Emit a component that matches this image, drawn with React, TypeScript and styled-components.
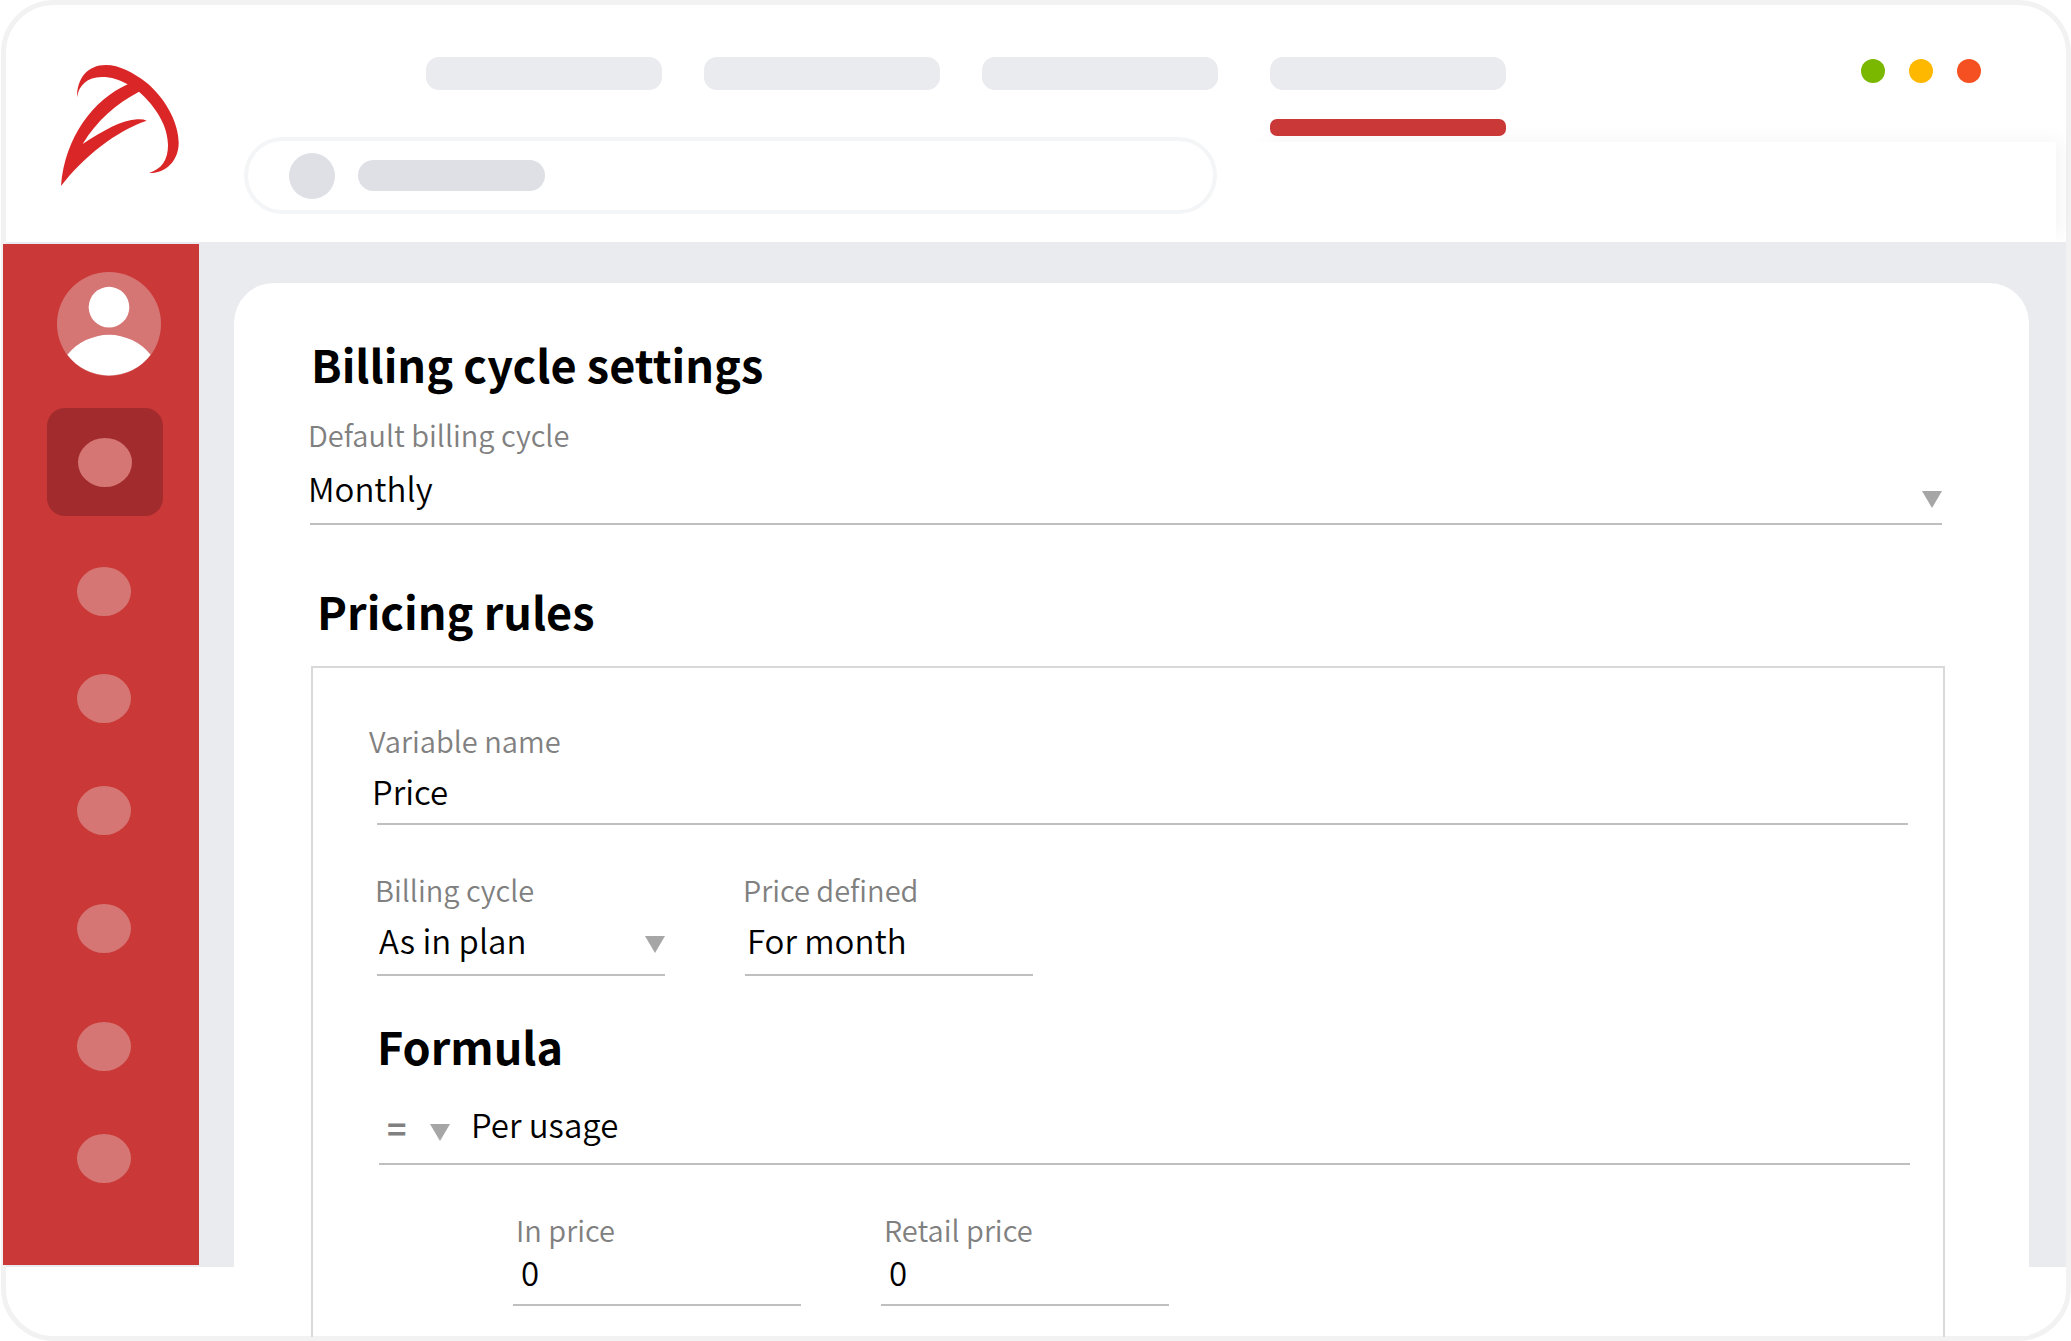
import React, { useId } from "react";
import styled, { createGlobalStyle } from "styled-components";

const color = {
  frame: "#f2f2f2",
  canvas: "#eaebef",
  skeleton: "#eaebef",
  skeletonDark: "#dfe0e5",
  searchBorder: "#f4f5f6",
  brand: "#ca3837",
  brandDark: "#a22b2d",
  brandSoft: "#d57675",
  logo: "#da2627",
  label: "#808080",
  arrow: "#a6a6a6",
  underline: "#bfbfbf",
  boxLine: "#d9d9d9",
};

const GlobalStyle = createGlobalStyle`
  *, *::before, *::after { box-sizing: border-box; }
  body {
    margin: 0;
    background: #fff;
    color: #000;
    font-family: "Noto Sans CJK JP", "Noto Sans", sans-serif;
  }
`;

/* ---------- shell ---------- */

const Frame = styled.div`
  display: flex;
  flex-direction: column;
  min-height: 100vh;
  margin-left: 1px;
  border: 5px solid ${color.frame};
  border-radius: 53px;
  background: #fff;
`;

const Header = styled.header`
  position: relative;
  display: flex;
  align-items: flex-start;
  padding: 52px 85px 28px 55px;
`;

const HeaderShade = styled.div`
  position: absolute;
  left: 1250px;
  right: 10px;
  top: 137px;
  bottom: 0;
  background: #fff;
  box-shadow: 8px -4px 20px -4px rgba(0, 0, 0, 0.05);
  clip-path: inset(-40px -12px 0 0);
`;

const LogoLink = styled.a`
  display: block;
  flex: 0 0 183px;
  padding-top: 8px;
  line-height: 0;
`;

const HeaderMain = styled.div`
  position: relative;
  display: flex;
  flex: 1;
  flex-direction: column;
  gap: 1px;
`;

const Nav = styled.nav`
  display: flex;
  align-items: flex-start;
  gap: 42px;
  padding-left: 182px;
`;

const NavItem = styled.a`
  display: flex;
  flex: 0 1 236px;
  flex-direction: column;
  gap: 29px;

  &[aria-current] {
    margin-left: 10px;
  }

  &::before {
    content: "";
    height: 33px;
    border-radius: 13px;
    background: ${color.skeleton};
  }

  &[aria-current]::after {
    content: "";
    height: 17px;
    border-radius: 7px;
    background: ${color.brand};
  }
`;

const Search = styled.label`
  display: flex;
  align-items: center;
  gap: 23px;
  width: 100%;
  max-width: 973px;
  height: 77px;
  padding: 0 41px;
  border: 4px solid ${color.searchBorder};
  border-radius: 39px;
`;

const SearchDot = styled.span`
  width: 46px;
  height: 46px;
  border-radius: 50%;
  background: ${color.skeletonDark};
`;

const SearchBar = styled.span`
  width: 187px;
  height: 31px;
  border-radius: 16px;
  background: ${color.skeletonDark};
`;

const SearchInput = styled.input`
  flex: 1;
  min-width: 0;
  border: 0;
  outline: 0;
  background: transparent;
  font: inherit;
`;

const WindowDots = styled.div`
  position: relative;
  display: flex;
  gap: 24px;
  padding-top: 2px;
`;

const WindowDot = styled.button<{ $fill: string }>`
  width: 24px;
  height: 24px;
  padding: 0;
  border: 0;
  border-radius: 50%;
  background: ${(p) => p.$fill};
`;

const Body = styled.div`
  position: relative;
  display: flex;
  flex: 1;
  background: linear-gradient(${color.canvas}, ${color.canvas}) no-repeat 0 0 / 100%
    calc(100% - 69px);
`;

/* ---------- sidebar ---------- */

const Sidebar = styled.nav`
  display: flex;
  flex: 0 0 196px;
  flex-direction: column;
  align-items: center;
  margin: 2px 0 71px -3px;
  padding-top: 28px;
  background: ${color.brand};
`;

const Avatar = styled.svg`
  display: block;
  width: 104px;
  height: 104px;
  margin-left: 16px;
`;

const SideItem = styled.button<{ $space: number; $active?: boolean }>`
  display: grid;
  place-items: center;
  width: 116px;
  height: ${(p) => (p.$active ? 108 : 49)}px;
  margin-top: ${(p) => p.$space}px;
  margin-left: ${(p) => (p.$active ? 8 : 6)}px;
  padding: 0;
  border: 0;
  border-radius: 18px;
  background: ${(p) => (p.$active ? color.brandDark : "transparent")};

  &::before {
    content: "";
    width: 54px;
    height: 49px;
    border-radius: 50%;
    background: ${color.brandSoft};
  }
`;

/* ---------- content ---------- */

const Card = styled.main`
  flex: 1;
  min-width: 0;
  margin: 41px 37px 0 35px;
  padding: 51px 84px 0 76px;
  border-radius: 40px 40px 0 0;
  background: #fff;
`;

const Heading = styled.h2<{ $indent?: number }>`
  margin: 0;
  padding-left: ${(p) => p.$indent ?? 0}px;
  font-size: 45px;
  font-weight: 700;
  line-height: 60px;
`;

const CycleSection = styled.section`
  padding: 22px 3px 56px 0;
`;

const RulesBox = styled.section`
  margin: 25px 0 -2px 1px;
  padding: 54px 35px 31px 64px;
  border: 2px solid ${color.boxLine};
  border-bottom: 0;
`;

const FieldBox = styled.div<{ $gap: number }>`
  display: flex;
  flex-direction: column;
  gap: ${(p) => p.$gap}px;
`;

const Label = styled.label<{ $inset: number }>`
  margin-left: ${(p) => p.$inset}px;
  color: ${color.label};
  font-size: 29px;
  font-weight: 350;
  line-height: 36px;
`;

const Line = styled.div<{ $drop: number }>`
  position: relative;
  display: flex;
  padding-bottom: ${(p) => p.$drop}px;
  border-bottom: 2px solid ${color.underline};
`;

const controlText = `
  flex: 1;
  min-width: 0;
  height: 44px;
  padding: 0;
  border: 0;
  border-radius: 0;
  outline: 0;
  appearance: none;
  background: transparent;
  color: #000;
  font-family: inherit;
  font-size: 33px;
  font-weight: 350;
  line-height: 44px;
`;

const Input = styled.input<{ $inset?: number }>`
  ${controlText}
  margin-left: ${(p) => p.$inset ?? 0}px;
`;

const Select = styled.select<{ $inset?: number }>`
  ${controlText}
  margin-left: ${(p) => p.$inset ?? 0}px;
`;

const Arrow = styled.svg<{ $bottom: number }>`
  position: absolute;
  right: 0;
  bottom: ${(p) => p.$bottom}px;
  width: 20px;
  height: 17px;
  fill: ${color.arrow};
  pointer-events: none;
`;

const Columns = styled.div<{ $indent?: number }>`
  display: flex;
  gap: 80px;
  padding: 46px 0 0 ${(p) => p.$indent ?? 0}px;

  & > * {
    flex: 0 1 288px;
    min-width: 0;
  }
`;

const FormulaHeading = styled(Heading)`
  margin: 40px 0 26px;
`;

const FormulaRow = styled.div`
  margin: 0 -2px 0 2px;
`;

const Operator = styled.div`
  position: relative;
  display: flex;
  flex: 0 0 71px;
  margin-right: 21px;
  padding-left: 8px;
`;

const OperatorSelect = styled.select`
  ${controlText}
  height: 52px;
  margin-bottom: -8px;
  color: ${color.label};
  font-weight: 700;
`;

function ArrowIcon({ bottom }: { bottom: number }) {
  return (
    <Arrow $bottom={bottom} viewBox="0 0 20 17" aria-hidden="true">
      <path d="M0 0h20L10 17z" />
    </Arrow>
  );
}

type FieldProps = {
  label: string;
  value: string;
  options?: string[];
  gap?: number;
  drop?: number;
  inset?: number;
  valueInset?: number;
  arrow?: number;
};

function Field({
  label,
  value,
  options,
  gap = 11,
  drop = 12,
  inset = -2,
  valueInset = inset,
  arrow = 21,
}: FieldProps) {
  const id = useId();
  return (
    <FieldBox $gap={gap}>
      <Label htmlFor={id} $inset={inset}>
        {label}
      </Label>
      <Line $drop={drop}>
        {options ? (
          <>
            <Select id={id} defaultValue={value} $inset={valueInset}>
              {options.map((o) => (
                <option key={o}>{o}</option>
              ))}
            </Select>
            <ArrowIcon bottom={arrow} />
          </>
        ) : (
          <Input id={id} defaultValue={value} $inset={valueInset} />
        )}
      </Line>
    </FieldBox>
  );
}

const sideItems = [
  { name: "Catalog", space: 32, active: true },
  { name: "Customers", space: 51 },
  { name: "Orders", space: 58 },
  { name: "Invoices", space: 63 },
  { name: "Reports", space: 69 },
  { name: "Tools", space: 69 },
  { name: "Settings", space: 63 },
];

export default function App() {
  return (
    <>
      <GlobalStyle />
      <Frame>
        <Header>
          <HeaderShade />
          <LogoLink href="#" aria-label="Home">
            <svg width="118" height="121" viewBox="183 195 354 363" aria-hidden="true">
              <path
                fill={color.logo}
                d="M231 292C231 235 262 195 318 195C358 195 400 218 437 246C492 290 536 365 536 428C536 480 500 520 447 519C485 508 504 480 504 436C504 380 470 322 417 275C350 310 290 362 248 432C310 392 365 360 412 358Q430 357 440 362C350 392 250 470 183 558C195 410 280 300 383 253C358 239 335 231 305 231C262 231 236 256 231 292Z"
              />
            </svg>
          </LogoLink>
          <HeaderMain>
            <Nav aria-label="Main">
              <NavItem href="#" aria-label="Overview" />
              <NavItem href="#" aria-label="Products" />
              <NavItem href="#" aria-label="Sales" />
              <NavItem href="#" aria-label="Billing" aria-current="page" />
            </Nav>
            <Search>
              <SearchDot />
              <SearchBar />
              <SearchInput type="search" aria-label="Search" />
            </Search>
          </HeaderMain>
          <WindowDots>
            <WindowDot $fill="#7ab800" aria-label="Minimize" />
            <WindowDot $fill="#ffb800" aria-label="Maximize" />
            <WindowDot $fill="#f45022" aria-label="Close" />
          </WindowDots>
        </Header>

        <Body>
          <Sidebar aria-label="Sections">
            <Avatar viewBox="0 0 105 105" aria-hidden="true">
              <circle cx="52.5" cy="52.5" r="52.5" fill={color.brandSoft} />
              <circle cx="52.5" cy="35.5" r="20.5" fill="#fff" />
              <path d="M10.5 83.500a52.500 52.500 0 0 0 84 0a54 54 0 0 0-84 0z" fill="#fff" />
            </Avatar>
            {sideItems.map((item) => (
              <SideItem
                key={item.name}
                aria-label={item.name}
                $space={item.space}
                $active={item.active}
              />
            ))}
          </Sidebar>

          <Card>
            <Heading $indent={1}>Billing cycle settings</Heading>
            <CycleSection>
              <Field
                label="Default billing cycle"
                value="Monthly"
                options={["Monthly", "Yearly"]}
                gap={14}
                drop={13}
                arrow={15}
              />
            </CycleSection>

            <Heading $indent={7}>Pricing rules</Heading>
            <RulesBox>
              <Field
                label="Variable name"
                value="Price"
                drop={10}
                inset={-8}
                valueInset={-5}
              />
              <Columns>
                <Field
                  label="Billing cycle"
                  value="As in plan"
                  options={["As in plan", "Monthly"]}
                  valueInset={2}
                />
                <Field label="Price defined" value="For month" valueInset={2} />
              </Columns>

              <FormulaHeading>Formula</FormulaHeading>
              <FormulaRow>
                <Line $drop={17}>
                  <Operator>
                    <OperatorSelect aria-label="Operator" defaultValue="=">
                      <option>=</option>
                      <option>+</option>
                    </OperatorSelect>
                    <ArrowIcon bottom={5} />
                  </Operator>
                  <Input aria-label="Formula" defaultValue="Per usage" />
                </Line>
              </FormulaRow>

              <Columns $indent={136}>
                <Field label="In price" value="0" gap={3} drop={10} inset={3} valueInset={8} />
                <Field label="Retail price" value="0" gap={3} drop={10} inset={3} valueInset={8} />
              </Columns>
            </RulesBox>
          </Card>
        </Body>
      </Frame>
    </>
  );
}
